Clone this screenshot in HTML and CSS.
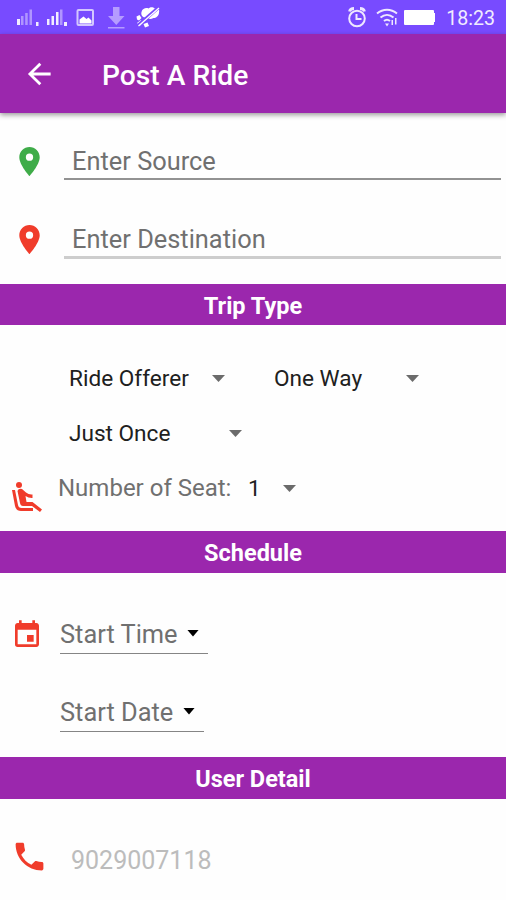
FILE: index.html
```html
<!DOCTYPE html>
<html lang="en">
<head>
<meta charset="utf-8">
<title>Post A Ride</title>
<link rel="stylesheet" href="styles.css">
</head>
<body>
<div class="status">
  <svg class="status-left" width="150" height="34" viewBox="10 0 150 34" fill="#fff">
    <path d="M17 19h3v6h-3zM36 22h2.500v4H36zM47 19h2.500v6H47zM51.500 16h2.500v9h-2.500zM56 12h2.500v13h-2.500zM64 22h3v4h-3z" opacity=".9"/>
    <path d="M21 16h2.500v9H21zM25.200 13h2.500v12h-2.500zM29.500 9.500h2.500V25h-2.500zM60 9.500h2.500V25H60z" opacity=".42"/>
    <rect x="77.500" y="10" width="15.500" height="15" rx="1" fill="none" stroke="#d3c7ff" stroke-width="2"/>
    <path d="M79.500 23.500v-4l4-3 3 2.500 2-1.500 3 3v3z"/>
    <path d="M113 7h6.500v9h5l-8.250 9-8.250-9h5zM108 27h16.500v1.500H108z" opacity=".45"/>
    <path d="M141.500 12c1-4 5-4.500 7-3.500 2-2 5-1.500 6 0 3-1.500 5.500 1 4.500 4 0 3.500-3 5.500-5.500 5.500-3 1.500-5 1-6-.5-4 1-7-2-6-5.500zM136.500 16.500l3-1.500 2 3-2.500 2.500-2-1zM137 23l4-3 2 3-3 3zM143.500 24l4-1.500 1.500 3.500-4 1.500z"/>
    <path d="M138 25.500L158 8" stroke="#784bff" stroke-width="3.600"/>
    <path d="M138.500 26L159 8" stroke="#fff" stroke-width="1.300"/>
  </svg>
  <div class="status-right">
    <svg width="90" height="34" viewBox="346 0 90 34" fill="none" stroke="#eee8ff" stroke-width="2">
      <circle cx="357" cy="18.500" r="7.800"/>
      <path d="M356.500 14v5h5"/>
      <path d="M349.500 11.500c.5-2 2.500-3 4.500-3M360 8.500c2.500 0 4 1 4.500 3" stroke-width="2.800"/>
      <path d="M377 13.500c6-5 14-5 20 0M380.500 17.500c4-3.500 9-3.500 13 0M384 21c2-1.700 4-1.700 6 0"/>
      <path d="M385 23.500h4l-2 3zM391.500 20h1.500v5h-1.500zM395 18h1.500v6.500H395z" fill="#eee8ff" stroke="none"/>
      <rect x="404" y="10" width="30" height="15" rx="1" fill="#fff" stroke="none"/>
      <path d="M434 13h1v9h-1z" fill="#fff" stroke="none"/>
    </svg>
    <span class="clock">18:23</span>
  </div>
</div>
<header class="bar">
  <svg class="back" width="34" height="34" viewBox="0 0 24 24" fill="#fff"><path d="M19.500 11H7.330l5.590-5.590L11.500 4l-8 8 8 8 1.410-1.410L7.330 13H19.500z"/></svg>
  <h1 class="title">Post A Ride</h1>
</header>
<main>
  <section class="places">
    <div class="field">
      <svg class="pin green" width="35" height="35" viewBox="0 0 24 24"><path d="M12 2C8.130 2 5 5.130 5 9c0 5.250 7 13 7 13s7-7.750 7-13c0-3.870-3.130-7-7-7zm0 9.500A2.500 2.500 0 1 1 12 6.500a2.500 2.500 0 0 1 0 5z"/></svg>
      <div class="input">Enter Source</div>
    </div>
    <div class="field">
      <svg class="pin red" width="35" height="35" viewBox="0 0 24 24"><path d="M12 2C8.130 2 5 5.130 5 9c0 5.250 7 13 7 13s7-7.750 7-13c0-3.870-3.130-7-7-7zm0 9.500A2.500 2.500 0 1 1 12 6.500a2.500 2.500 0 0 1 0 5z"/></svg>
      <div class="input soft">Enter Destination</div>
    </div>
  </section>
  <h2 class="band">Trip Type</h2>
  <section class="trip">
    <div class="row">
      <div class="select offer"><span>Ride Offerer</span><i class="caret"></i></div>
      <div class="select way"><span>One Way</span><i class="caret"></i></div>
    </div>
    <div class="row">
      <div class="select once"><span>Just Once</span><i class="caret"></i></div>
    </div>
    <div class="row seats">
      <svg class="seat red" width="32" height="32" viewBox="0 0 32 32"><circle cx="8" cy="4" r="3"/><path d="M1 9h3l3 15q.5 3 3.500 3h11.500v3H10q-5 0-6-5z"/><path d="M6.500 10q1-3 4.500-2l4 3.500q3 2.500 6.500 2v3.500q-4 .2-7-2l1 6h6l9.500 7.500-2 2.500-8-6H12q-2.500 0-3-3z"/></svg>
      <span class="label">Number of Seat:</span>
      <div class="select count"><span>1</span><i class="caret"></i></div>
    </div>
  </section>
  <h2 class="band">Schedule</h2>
  <section class="schedule">
    <div class="when">
      <svg class="cal red" width="32" height="32" viewBox="0 0 24 24"><path d="M17 12h-5v5h5v-5zM16 1v2H8V1H6v2H5c-1.110 0-1.990.9-1.990 2L3 19a2 2 0 0 0 2 2h14c1.100 0 2-.9 2-2V5c0-1.100-.9-2-2-2h-1V1h-2zm3 18H5V8h14v11z"/></svg>
      <div class="picker time"><span>Start Time</span><i class="caret dark"></i></div>
    </div>
    <div class="when">
      <div class="picker date"><span>Start Date</span><i class="caret dark"></i></div>
    </div>
  </section>
  <h2 class="band">User Detail</h2>
  <section class="user">
    <svg class="red" width="37" height="37" viewBox="0 0 24 24"><path d="M6.620 10.790c1.440 2.830 3.760 5.140 6.590 6.590l2.200-2.200c.27-.27.67-.36 1.020-.24 1.120.37 2.330.57 3.570.57.55 0 1 .45 1 1V20c0 .55-.45 1-1 1-9.390 0-17-7.610-17-17 0-.55.45-1 1-1h3.500c.55 0 1 .45 1 1 0 1.250.2 2.450.57 3.570.11.35.03.74-.25 1.020l-2.200 2.200z"/></svg>
    <span class="phone">9029007118</span>
  </section>
</main>
</body>
</html>
```
FILE: styles.css
```css
* { box-sizing: border-box; }
body {
  margin: 0;
  height: 900px;
  overflow: hidden;
  background: #fefefe;
  font: 25.4px/30px Roboto, sans-serif;
  color: #707070;
}
svg { display: block; flex: none; }
.status {
  display: flex;
  justify-content: space-between;
  height: 34px;
  padding: 0 11px 0 10px;
  background: #784bff;
}
.status-right { display: flex; gap: 10px; }
.clock { font-size: 19.6px; line-height: 37px; color: #f1ecff; }
.bar {
  position: relative;
  display: flex;
  align-items: center;
  height: 78.5px;
  padding-left: 23px;
  background: #9b27ad;
  box-shadow: 0 2px 5px rgba(0, 0, 0, .4);
}
.back { margin-top: 1px; }
.title {
  margin: 5px 0 0 45px;
  font-size: 28.2px;
  line-height: 32px;
  font-weight: 500;
  color: #fff;
}
.green { fill: #3fac49; }
.red { fill: #f03c2b; }
.places { height: 171px; padding-top: 15.500px; }
.field { display: flex; height: 78px; padding: 0 5px 0 12px; }
.pin { margin-top: 16px; }
.input {
  flex: 1;
  height: 52px;
  margin-left: 17px;
  padding: 18px 8px 0;
  border-bottom: 2px solid #929292;
}
.soft { height: 52.500px; border-bottom: 3px solid #cdcdcd; }
.band {
  height: 41.500px;
  margin: 0;
  background: #9b27ad;
  color: #fff;
  font-size: 23.5px;
  font-weight: 700;
  line-height: 44px;
  text-align: center;
}
.trip { height: 206px; padding-top: 26px; }
.row { display: flex; height: 55px; align-items: center; padding-left: 69px; }
.select {
  display: flex;
  align-items: center;
  justify-content: space-between;
  color: #202020;
  font-size: 22.6px;
}
.caret {
  width: 13px;
  height: 7px;
  background: #6b6b6b;
  clip-path: polygon(0 0, 100% 0, 50% 100%);
}
.offer { width: 156px; }
.way { width: 145px; margin-left: 49px; }
.once { width: 173px; }
.seats { padding-left: 11px; }
.seat { margin-top: 17px; }
.label { margin: -2px 0 0 15px; width: 173px; font-size: 24px; white-space: nowrap; }
.count { width: 48px; margin-left: 17px; }
.schedule { height: 184.500px; padding-top: 36px; }
.when { display: flex; height: 78px; padding-left: 11px; }
.cal { margin: 10px 17px 0 0; }
.picker {
  display: flex;
  align-items: center;
  justify-content: space-between;
  height: 45px;
  padding-right: 9px;
  padding-top: 7px;
  border-bottom: 1.500px solid #858585;
}
.picker .caret { margin-top: -2px; }
.time { width: 148px; }
.date { width: 144px; margin-left: 49px; }
.dark { background: #000; width: 12px; }
.user { display: flex; padding: 39px 0 0 11px; }
.phone { margin: 8px 0 0 23px; color: #bcbcbc; font-size: 25px; }
```
